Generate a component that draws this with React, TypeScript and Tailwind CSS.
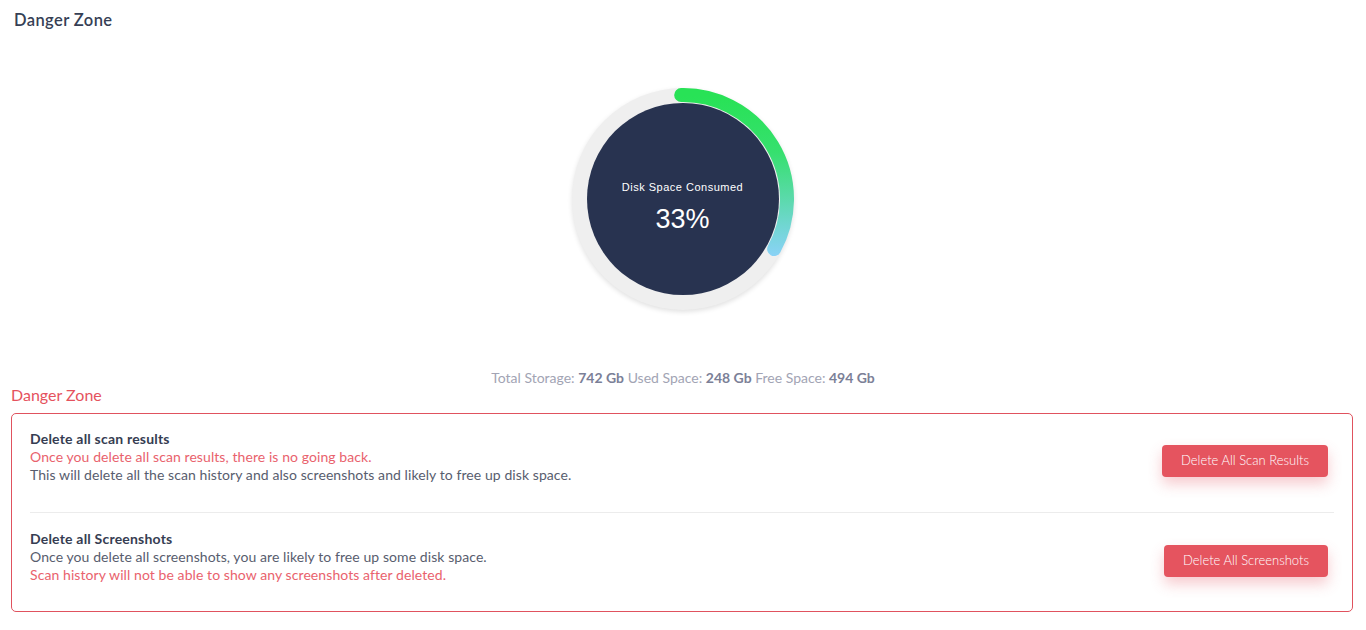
import React from 'react';

const percent = 33;

function DiskGauge() {
  const r = 104;
  const cx = 111;
  const cy = 111;
  const start = -1 * (Math.PI / 180);
  const end = (percent / 100) * 2 * Math.PI;
  const x0 = cx + r * Math.sin(start);
  const y0 = cy - r * Math.cos(start);
  const x1 = cx + r * Math.sin(end);
  const y1 = cy - r * Math.cos(end);
  const large = end - start > Math.PI ? 1 : 0;
  const d = `M ${x0} ${y0} A ${r} ${r} 0 ${large} 1 ${x1} ${y1}`;

  return (
    <div className="relative w-[222px] h-[222px] rounded-full bg-[#efefef] shadow-[0_2px_5px_rgba(0,0,0,0.12)] flex items-center justify-center">
      <div className="w-[192px] h-[192px] rounded-full bg-[#283350] flex flex-col items-center justify-center pt-[14px] font-['Liberation_Sans',Arial,sans-serif] text-white">
        <span className="text-[11px] tracking-[0.5px]">Disk Space Consumed</span>
        <span className="text-[27px] leading-none mt-[10px]">{percent}%</span>
      </div>
      {/* progress arc */}
      <svg className="absolute inset-0" width="222" height="222" viewBox="0 0 222 222">
        <defs>
          <linearGradient id="arcGrad" gradientUnits="userSpaceOnUse" x1="0" y1="8" x2="0" y2="168">
            <stop offset="0%" stopColor="#28e256" />
            <stop offset="35%" stopColor="#36e06e" />
            <stop offset="62%" stopColor="#58daa6" />
            <stop offset="82%" stopColor="#72d6d4" />
            <stop offset="100%" stopColor="#8ad2f6" />
          </linearGradient>
        </defs>
        <path d={d} fill="none" stroke="url(#arcGrad)" strokeWidth="14" strokeLinecap="round" />
      </svg>
    </div>
  );
}

function DangerRow({
  title,
  lines,
  button,
}: {
  title: string;
  lines: { text: string; red?: boolean }[];
  button: string;
}) {
  return (
    <div className="flex items-center justify-between">
      <div className="flex flex-col leading-[18px] text-[14px] tracking-[0.08px]">
        <span className="font-bold text-[#363d52] tracking-[0.2px]">{title}</span>
        {lines.map((l) => (
          <span key={l.text} className={l.red ? 'text-[#e9626d]' : 'text-[#585d6e]'}>
            {l.text}
          </span>
        ))}
      </div>
      <button className="h-[32px] px-[19px] mr-[6px] mt-[8px] rounded-[4px] bg-[#e5545f] text-white text-[13px] font-light shadow-[0_7px_14px_rgba(229,84,95,0.3)]">
        {button}
      </button>
    </div>
  );
}

export default function App() {
  return (
    <div className="min-h-[630px] bg-white font-['Lato',sans-serif] px-[11px]">
      <h1 className="pt-[10px] pl-[3px] text-[16.5px] font-semibold leading-[20px] text-[#363f55] tracking-[0.4px]">
        Danger Zone
      </h1>

      <div className="flex justify-center mt-[58px] pr-[1px]">
        <DiskGauge />
      </div>

      <p className="mt-[60px] text-center text-[14px] leading-[16px] text-[#a2a4b4]">
        Total Storage: <b className="text-[#7b8097]">742 Gb</b> Used Space:{' '}
        <b className="text-[#7b8097]">248 Gb</b> Free Space: <b className="text-[#7b8097]">494 Gb</b>
      </p>

      <h2 className="mt-[-1px] text-[16px] leading-[20px] text-[#e5525e]">Danger Zone</h2>

      <div className="mt-[8px] mr-[2px] border border-[#e0525e] rounded-[5px] px-[18px]">
        <div className="pt-[16px] pb-[28px]">
          <DangerRow
            title="Delete all scan results"
            lines={[
              { text: 'Once you delete all scan results, there is no going back.', red: true },
              { text: 'This will delete all the scan history and also screenshots and likely to free up disk space.' },
            ]}
            button="Delete All Scan Results"
          />
        </div>
        <div className="border-t border-[#ececec]" />
        <div className="pt-[17px] pb-[27px]">
          <DangerRow
            title="Delete all Screenshots"
            lines={[
              { text: 'Once you delete all screenshots, you are likely to free up some disk space.' },
              { text: 'Scan history will not be able to show any screenshots after deleted.', red: true },
            ]}
            button="Delete All Screenshots"
          />
        </div>
      </div>
    </div>
  );
}
